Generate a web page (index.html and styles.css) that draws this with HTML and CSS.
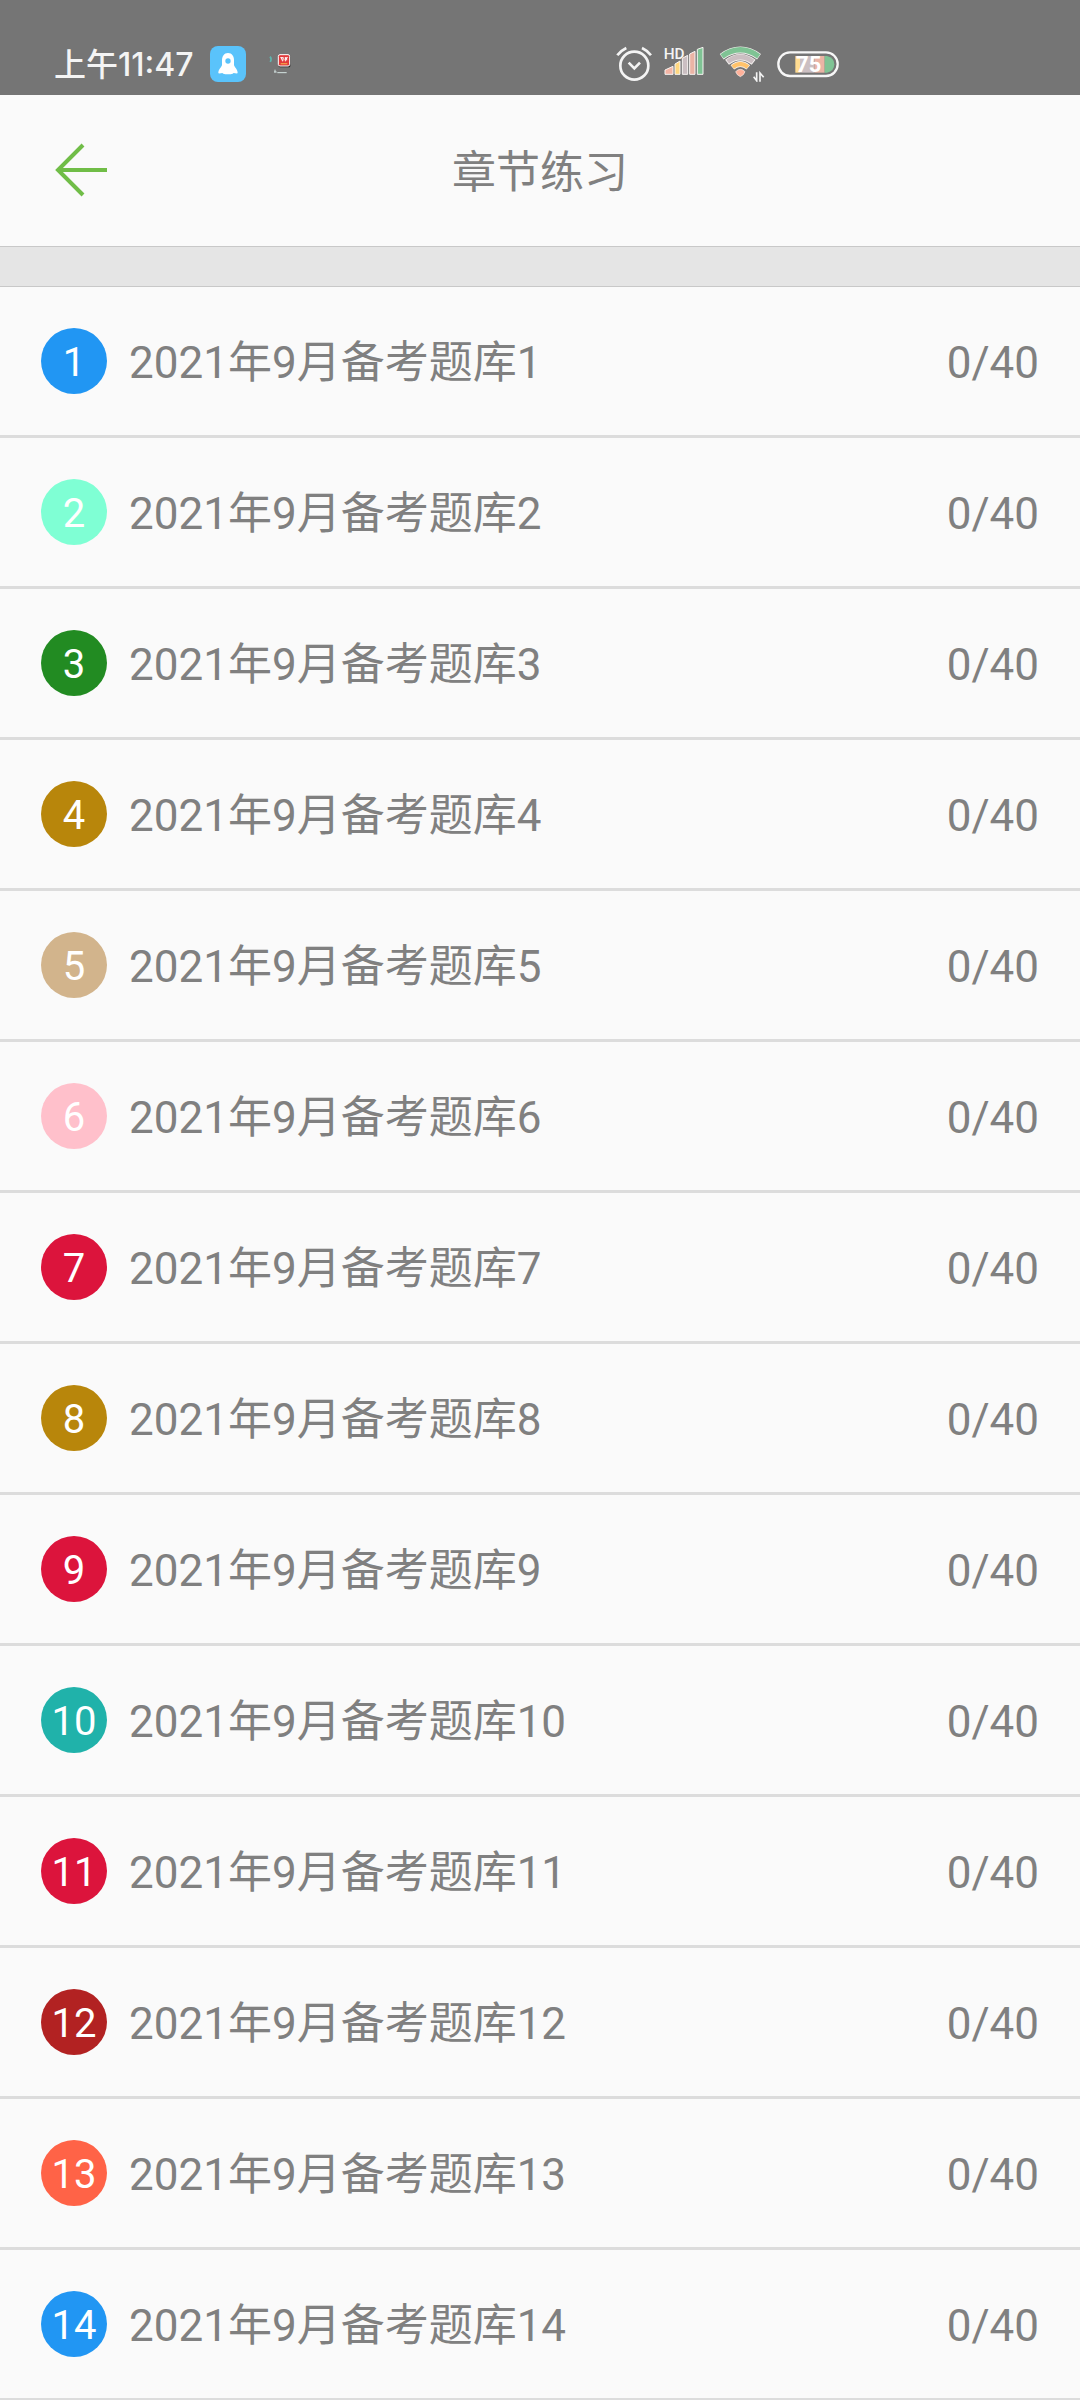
FILE: index.html
```html
<!DOCTYPE html>
<html lang="zh-CN">
<head>
<meta charset="utf-8">
<meta name="viewport" content="width=device-width, initial-scale=1">
<title>章节练习</title>
<link rel="stylesheet" href="styles.css">
</head>
<body>
<div class="status-bar">
  <div class="status-group">
    <span class="clock">上午11:47</span>
    <svg class="app-icon" width="36" height="36" viewBox="0 0 108 108" aria-hidden="true">
      <rect width="108" height="108" rx="24" fill="#5ac3fb"/>
      <path d="M54 21C42 21 36 31 36 43v14c-2 8-11 12-11 25 4 1 8 0 12-1 4 3 8 4 12 4h10c4 0 8-1 12-4 4 1 8 2 12 1 0-13-9-17-11-25V43C72 31 66 21 54 21z" fill="#fff"/>
      <circle cx="54" cy="45" r="8" fill="#5ac3fb"/>
    </svg>
    <svg class="notice-icon" width="24" height="20" viewBox="0 0 72 60" aria-hidden="true">
      <path d="M6 8q6 6 1 16" fill="none" stroke="#5fb5ae" stroke-width="5"/>
      <rect x="32" y="4" width="35" height="36" rx="4" fill="#222"/>
      <rect x="31" y="2" width="34" height="34" rx="5" fill="#e2393b" stroke="#fff" stroke-width="3"/>
      <path d="M37 11h9l-2 11M40 11l3 9M52 9v13M50 16l9-6M56 10v9" fill="none" stroke="#fff" stroke-width="3"/>
      <path d="M38 29h20" stroke="#f39a45" stroke-width="4"/>
      <path d="M21 47v8M18 54h8M28 56h28" stroke="#d5e4e2" stroke-width="3"/>
    </svg>
  </div>
  <div class="status-group system">
    <svg width="36" height="36" viewBox="50 48 108 108" aria-hidden="true">
      <g fill="none" stroke="#f4f4f4" stroke-width="8">
        <circle cx="105" cy="107" r="42"/>
        <path d="M54 76Q64 62 81 54M128 54Q145 62 155 76"/>
        <path d="M88 98l17 17 17-17"/>
      </g>
    </svg>
    <svg class="signal" width="40" height="36" viewBox="193 48 120 108" aria-hidden="true">
      <g stroke="#f7f4f2" stroke-width="3">
        <path d="M196 133v-13l24-11v24z" fill="#f4b5a5"/>
        <path d="M226 133v-31l15-9v40z" fill="#ffd77f"/>
        <path d="M248 133V85l16-9v57z" fill="#cbbfc2"/>
        <path d="M270 133V72l16-8v69z" fill="#ebb4a5"/>
        <path d="M293 133V58l17-6v81z" fill="#7fc394"/>
      </g>
      <text x="192" y="87" class="hd-label">HD</text>
    </svg>
    <svg class="wifi" width="46" height="36" viewBox="358 48 138 108" aria-hidden="true">
      <g fill="none" stroke="#f4f1ef">
        <path d="M366 80Q422 40 478 80" stroke-width="20"/>
        <path d="M382 97Q422 66 462 97" stroke-width="19"/>
        <path d="M398 112Q422 92 446 112" stroke-width="17"/>
      </g>
      <g fill="none">
        <path d="M367 79Q422 40 477 79" stroke="#7fc394" stroke-width="16"/>
        <path d="M384 95Q422 67 460 95" stroke="#cbbfc2" stroke-width="14"/>
        <path d="M399 111Q422 93 445 111" stroke="#ffc36b" stroke-width="13"/>
      </g>
      <path d="M408 125q14-14 28 0l-5 9-9 6-9-6z" fill="#ffb19a" stroke="#f4f1ef" stroke-width="2"/>
      <path d="M462 140l9 12v-25M481 155v-26l11 13" fill="none" stroke="#f4f4f4" stroke-width="5"/>
    </svg>
    <svg class="battery" width="62" height="36" viewBox="533 48 186 108" aria-hidden="true">
      <path d="M588 78h14v50h-14z" fill="#ffdc91"/>
      <path d="M602 78h44v50h-44z" fill="#cbbfc2"/>
      <path d="M646 78h30v50h-30z" fill="#ebb4a5"/>
      <path d="M676 78h7q22 5 22 25t-22 25h-7z" fill="#7fc394"/>
      <rect x="537" y="67" width="178" height="71" rx="35" fill="none" stroke="#f7f7f7" stroke-width="7"/>
      <text x="628" y="126" text-anchor="middle" class="battery-label">75</text>
    </svg>
  </div>
</div>

<header class="app-bar">
  <button class="back" type="button" aria-label="返回">
    <svg width="54" height="56" viewBox="0 0 54 56" aria-hidden="true">
      <path d="M53 27H4M29 2L4 27l25 25" fill="none" stroke="#70bd47" stroke-width="4"/>
    </svg>
  </button>
  <h1 class="title">章节练习</h1>
</header>

<main>
  <ul class="chapters">
    <li class="chapter"><span class="badge blue">1</span><span class="name">2021年9月备考题库1</span><span class="progress">0/40</span></li>
    <li class="chapter"><span class="badge aquamarine">2</span><span class="name">2021年9月备考题库2</span><span class="progress">0/40</span></li>
    <li class="chapter"><span class="badge green">3</span><span class="name">2021年9月备考题库3</span><span class="progress">0/40</span></li>
    <li class="chapter"><span class="badge gold">4</span><span class="name">2021年9月备考题库4</span><span class="progress">0/40</span></li>
    <li class="chapter"><span class="badge tan">5</span><span class="name">2021年9月备考题库5</span><span class="progress">0/40</span></li>
    <li class="chapter"><span class="badge pink">6</span><span class="name">2021年9月备考题库6</span><span class="progress">0/40</span></li>
    <li class="chapter"><span class="badge crimson">7</span><span class="name">2021年9月备考题库7</span><span class="progress">0/40</span></li>
    <li class="chapter"><span class="badge gold">8</span><span class="name">2021年9月备考题库8</span><span class="progress">0/40</span></li>
    <li class="chapter"><span class="badge crimson">9</span><span class="name">2021年9月备考题库9</span><span class="progress">0/40</span></li>
    <li class="chapter"><span class="badge teal">10</span><span class="name">2021年9月备考题库10</span><span class="progress">0/40</span></li>
    <li class="chapter"><span class="badge crimson">11</span><span class="name">2021年9月备考题库11</span><span class="progress">0/40</span></li>
    <li class="chapter"><span class="badge brick">12</span><span class="name">2021年9月备考题库12</span><span class="progress">0/40</span></li>
    <li class="chapter"><span class="badge tomato">13</span><span class="name">2021年9月备考题库13</span><span class="progress">0/40</span></li>
    <li class="chapter"><span class="badge blue">14</span><span class="name">2021年9月备考题库14</span><span class="progress">0/40</span></li>
  </ul>
</main>
</body>
</html>
```
FILE: styles.css
```css
*,
*::before {
  box-sizing: border-box;
}

body {
  margin: 0;
  background: #fafafa;
  color: #808080;
  font-family: Roboto, "Noto Sans CJK SC", sans-serif;
  font-size: 44px;
  line-height: 52px;
}

svg {
  display: block;
  flex: none;
}

/* Phone status bar */
.status-bar {
  display: flex;
  align-items: center;
  justify-content: space-between;
  padding: 40px 241px 7px 54px;
  background: #757575;
}

.status-group {
  display: flex;
  align-items: center;
}

.clock {
  padding-top: 2px;
  color: #f4f4f4;
  font-family: Inter, "Noto Sans CJK SC", sans-serif;
  font-size: 32px;
  font-weight: 500;
  line-height: 46px;
}

.app-icon {
  margin-left: 16px;
}

.notice-icon {
  margin-left: 22px;
}

.signal {
  margin-left: 12px;
}

.wifi {
  margin-left: 15px;
}

.battery {
  margin-left: 12px;
}

.hd-label {
  fill: #f4f4f4;
  font: 500 46px Roboto, sans-serif;
}

.battery-label {
  fill: #fff;
  font: 700 66px Roboto, sans-serif;
}

/* Title bar */
.app-bar {
  display: grid;
  grid-template-columns: 1fr auto 1fr;
  align-items: center;
  padding: 48px 54px 47px;
}

.back {
  justify-self: start;
  padding: 0;
  border: 0;
  background: none;
}

.title {
  margin: 0;
  padding-top: 4px;
  font-size: 44px;
  font-weight: 400;
  line-height: 52px;
}

/* Chapter list */
.chapters {
  margin: 0;
  padding: 0;
  list-style: none;
}

.chapters::before {
  content: "";
  display: block;
  height: 41px;
  border: solid #c8c8c8;
  border-width: 1px 0;
  background: #e5e5e5;
}

.chapter {
  display: flex;
  align-items: center;
  gap: 22px;
  padding: 41px;
  border-bottom: 3px solid #dcdcdc;
}

.chapter:last-child {
  border-bottom-width: 2px;
}

.name,
.progress {
  padding-top: 4px;
}

.name {
  flex: 1;
}

.badge {
  flex: none;
  width: 66px;
  padding-top: 4px;
  border-radius: 50%;
  color: #fff;
  font-size: 40px;
  line-height: 62px;
  text-align: center;
}

.blue { background: #2196f3; }
.aquamarine { background: #7fffd4; }
.green { background: #228b22; }
.gold { background: #b8860b; }
.tan { background: #d2b48c; }
.pink { background: #ffc0cb; }
.crimson { background: #dc143c; }
.teal { background: #20b2aa; }
.brick { background: #b22222; }
.tomato { background: #ff6347; }
```
